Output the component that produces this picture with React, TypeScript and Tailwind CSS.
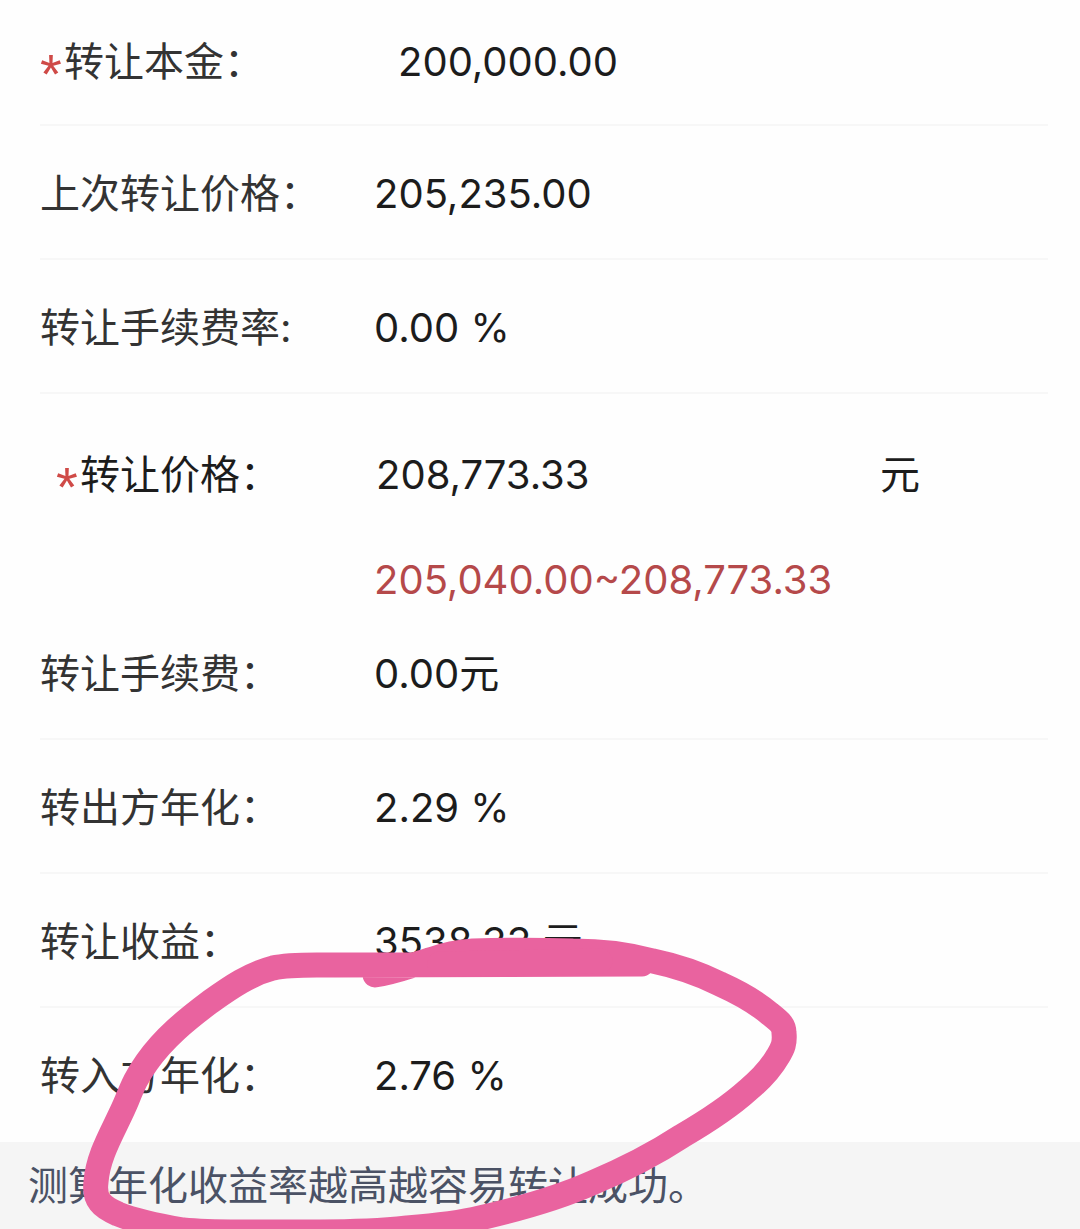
import React, { useState } from 'react';

interface InfoRowProps {
  label: string;
  children: React.ReactNode;
}

const InfoRow = ({ label, children }: InfoRowProps) => (
  <div className="flex h-[134px] items-center border-b-2 border-[#f7f7f7] pt-1">
    <dt className="w-[334px] shrink-0 text-[#333333]">{label}</dt>
    <dd>{children}</dd>
  </div>
);

const Required = () => (
  <span className="inline-block w-6 align-bottom font-['Liberation_Sans'] text-[56px] leading-[24px] text-[#cf4a47]" aria-hidden="true">*</span>
);

// Hand drawn marker loop around the incoming annual rate
const MarkerLoop = () => (
  <svg
    className="pointer-events-none absolute top-0 left-0"
    width="1080"
    height="1229"
    viewBox="0 0 1080 1229"
    fill="none"
    stroke="#e9639f"
    strokeWidth="25"
    strokeLinecap="round"
    strokeLinejoin="round"
    aria-hidden="true"
  >
    <path d="M375 975 C395 972 412 965 433 959 C447 954 460 952 473 951 C505 950 540 950 573 951 C602 951 627 954 653 961 C677 966 698 973 720 984 C740 993 756 1002 770 1014 C780 1022 784 1025 784 1033 C785 1043 783 1048 778 1056 C770 1070 760 1080 748 1090 C728 1108 706 1122 682 1136 C653 1155 623 1170 592 1183 C556 1199 519 1209 480 1218 C456 1224 432 1226 407 1228 C380 1231 350 1232 320 1232 L240 1232 C220 1232 202 1232 183 1230 C160 1226 138 1222 118 1214 C109 1210 103 1206 100 1202 C96 1197 95 1190 96 1182 C98 1153 116 1127 127 1100 C133 1085 137 1076 147 1062 C164 1038 186 1020 210 1002 C231 987 250 974 273 968 C290 964 312 965 333 965 L642 964" />
    <path d="M440 964 L600 961" />
  </svg>
);

const App = () => {
  const [principal, setPrincipal] = useState('200,000.00');
  const [price, setPrice] = useState('208,773.33');

  return (
    <main className="relative flex min-h-screen flex-col overflow-hidden bg-[#fefefe] font-[Inter,'Noto_Sans_CJK_SC',sans-serif] text-[40px] leading-[48px] text-[#1c1c1c]">
      <form className="pr-8 pl-10">
        <div className="flex h-[126px] items-center border-b-2 border-[#f7f7f7]">
          <label htmlFor="principal" className="w-[358px] shrink-0 text-[#333333]">
            <Required />转让本金：
          </label>
          <input
            id="principal"
            className="w-[400px] bg-transparent outline-none"
            value={principal}
            onChange={(e) => setPrincipal(e.target.value)}
          />
        </div>
        <dl>
          <InfoRow label="上次转让价格：">205,235.00</InfoRow>
          <InfoRow label="转让手续费率:">0.00 %</InfoRow>
        </dl>
        <div className="flex h-[162px] items-center">
          <label htmlFor="price" className="w-[336px] shrink-0 pl-4">
            <Required />转让价格：
          </label>
          <input
            id="price"
            className="w-[504px] bg-transparent outline-none"
            value={price}
            onChange={(e) => setPrice(e.target.value)}
          />
          <span>元</span>
        </div>
        <p className="h-[50px] pl-[334px] text-[#b5494a]">205,040.00~208,773.33</p>
        <dl className="[&>div:last-child]:border-transparent">
          <InfoRow label="转让手续费：">0.00元</InfoRow>
          <InfoRow label="转出方年化：">2.29 %</InfoRow>
          <InfoRow label="转让收益：">3538.33 元</InfoRow>
          <InfoRow label="转入方年化：">2.76 %</InfoRow>
        </dl>
      </form>
      <footer className="flex-1 bg-[#f5f5f5] px-7 py-5 text-[#4b5265]">
        测算年化收益率越高越容易转让成功。
      </footer>
      <MarkerLoop />
    </main>
  );
};

export default App;
